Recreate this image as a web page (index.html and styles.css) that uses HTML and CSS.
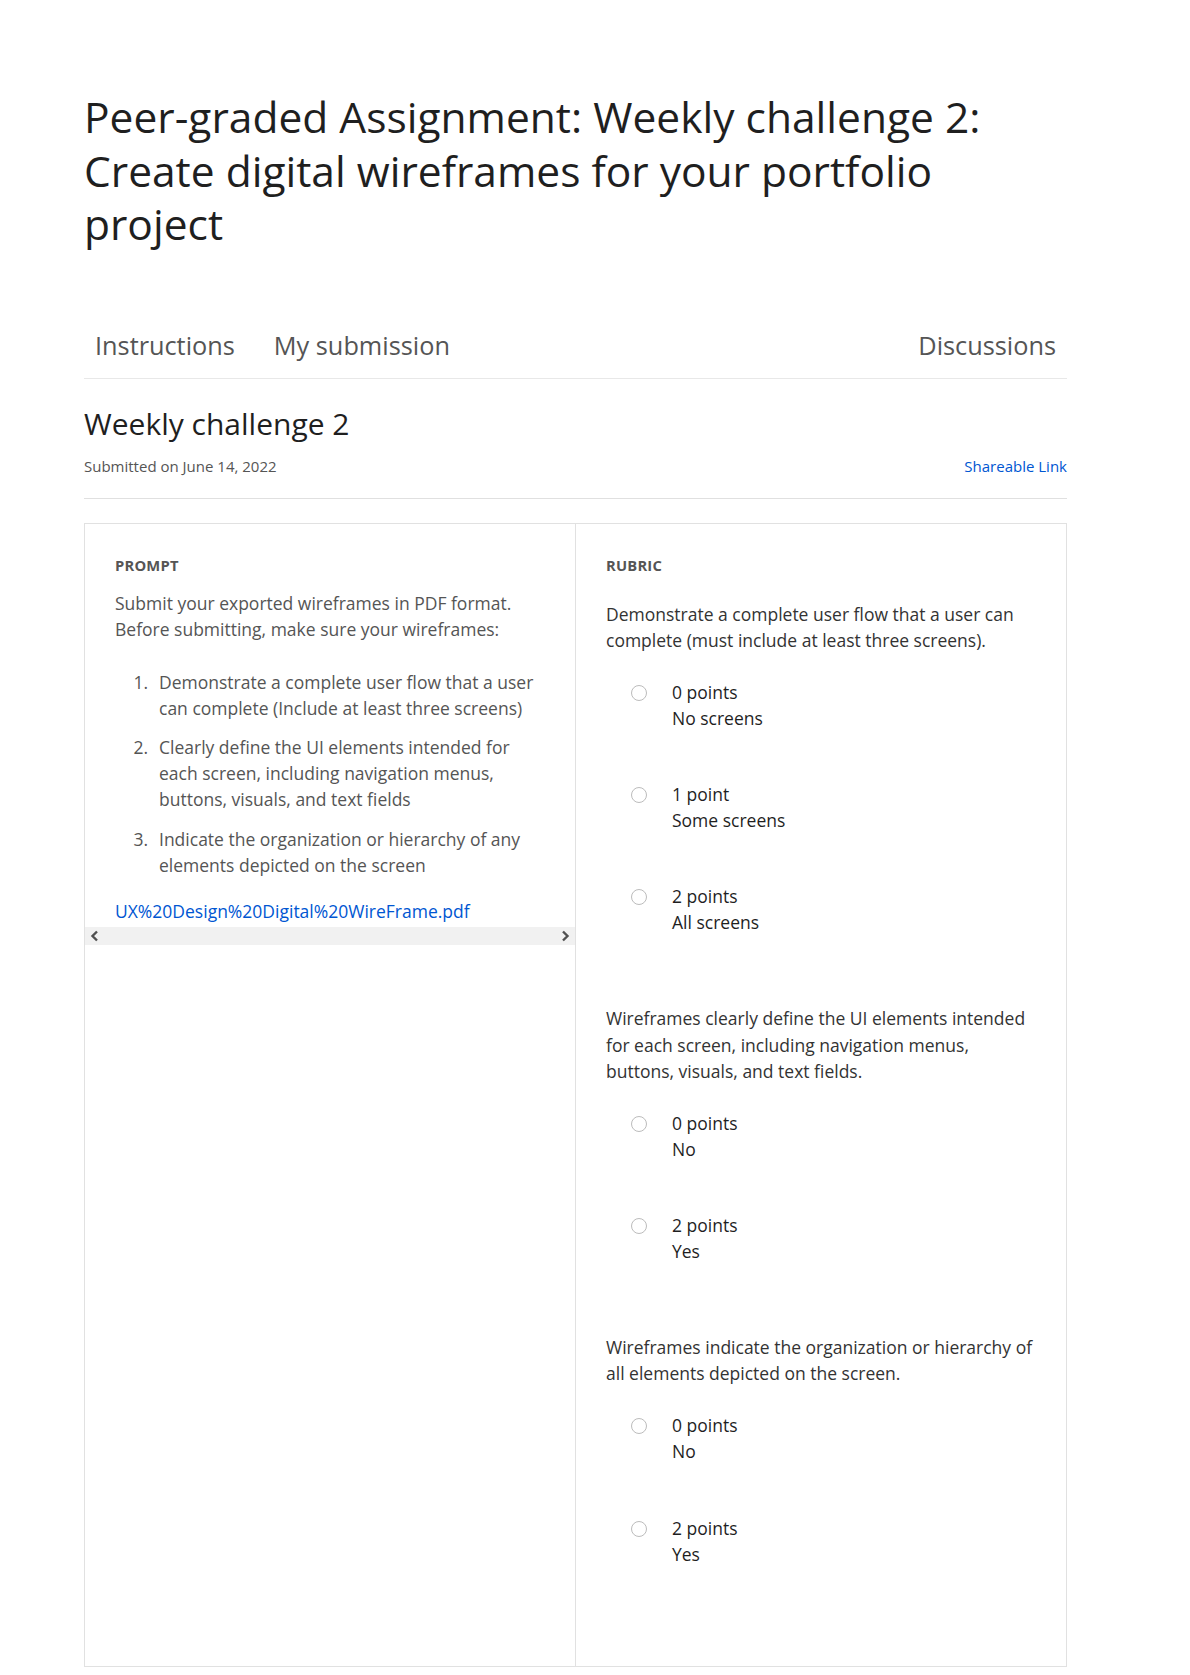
FILE: index.html
```html
<!DOCTYPE html>
<html lang="en">
<head>
<meta charset="utf-8">
<title>Peer-graded Assignment</title>
<link rel="stylesheet" href="styles.css">
</head>
<body>
<main class="page">
  <h1 class="title">Peer-graded Assignment: Weekly challenge 2: Create digital wireframes for your portfolio project</h1>

  <nav class="tabs">
    <div class="tabs-left">
      <a class="tab">Instructions</a>
      <a class="tab">My submission</a>
    </div>
    <a class="tab">Discussions</a>
  </nav>

  <section class="sub-head">
    <h2 class="sub-title">Weekly challenge 2</h2>
    <div class="sub-meta">
      <span class="submitted">Submitted on June 14, 2022</span>
      <a class="share">Shareable Link</a>
    </div>
  </section>

  <section class="grid">
    <div class="col col-prompt">
      <div class="prompt-scroll">
        <h3 class="label">PROMPT</h3>
        <p class="prompt-text">Submit your exported wireframes in PDF format. Before submitting, make sure your wireframes:</p>
        <ol class="prompt-list">
          <li>Demonstrate a complete user flow that a user can complete (Include at least three screens)</li>
          <li>Clearly define the UI elements intended for each screen, including navigation menus, buttons, visuals, and text fields</li>
          <li>Indicate the organization or hierarchy of any elements depicted on the screen</li>
        </ol>
        <a class="file-link">UX%20Design%20Digital%20WireFrame.pdf</a>
      </div>
      <div class="hscroll">
        <svg class="arrow" width="9" height="12" viewBox="0 0 9 12"><path d="M7 1.5 L2.5 6 L7 10.5" fill="none" stroke="#505050" stroke-width="2.4"/></svg>
        <svg class="arrow" width="9" height="12" viewBox="0 0 9 12"><path d="M2 1.5 L6.5 6 L2 10.5" fill="none" stroke="#505050" stroke-width="2.4"/></svg>
      </div>
    </div>

    <div class="col col-rubric">
      <h3 class="label label-rubric">RUBRIC</h3>

      <div class="criterion">
        <p class="crit-text">Demonstrate a complete user flow that a user can complete (must include at least three screens).</p>
        <div class="option"><span class="radio"></span><div class="opt-text"><div>0 points</div><div>No screens</div></div></div>
        <div class="option"><span class="radio"></span><div class="opt-text"><div>1 point</div><div>Some screens</div></div></div>
        <div class="option"><span class="radio"></span><div class="opt-text"><div>2 points</div><div>All screens</div></div></div>
      </div>

      <div class="criterion">
        <p class="crit-text">Wireframes clearly define the UI elements intended for each screen, including navigation menus, buttons, visuals, and text fields.</p>
        <div class="option"><span class="radio"></span><div class="opt-text"><div>0 points</div><div>No</div></div></div>
        <div class="option"><span class="radio"></span><div class="opt-text"><div>2 points</div><div>Yes</div></div></div>
      </div>

      <div class="criterion">
        <p class="crit-text">Wireframes indicate the organization or hierarchy of all elements depicted on the screen.</p>
        <div class="option"><span class="radio"></span><div class="opt-text"><div>0 points</div><div>No</div></div></div>
        <div class="option"><span class="radio"></span><div class="opt-text"><div>2 points</div><div>Yes</div></div></div>
      </div>
    </div>
  </section>
</main>
</body>
</html>
```

FILE: styles.css
```css
* { box-sizing: border-box; }

html, body {
  margin: 0;
  padding: 0;
  background: #ffffff;
}

body {
  font-family: "Open Sans", "Noto Sans", "Liberation Sans", sans-serif;
  color: #1f1f1f;
}

.page {
  width: 983px;
  margin-left: 84px;
  padding-top: 90px;
}

.title {
  margin: 0;
  font-size: 42.5px;
  line-height: 53.5px;
  font-weight: 400;
  color: #1f1f1f;
  width: 960px;
}

.tabs {
  display: flex;
  justify-content: space-between;
  margin-top: 78px;
  border-bottom: 1px solid #e8e8e8;
  padding-bottom: 17px;
}

.tabs-left {
  display: flex;
  gap: 17px;
}

.tab {
  display: block;
  padding: 0 11px;
  font-size: 25.3px;
  line-height: 32px;
  color: #555555;
}

.sub-head {
  padding-top: 25px;
  padding-bottom: 22px;
  border-bottom: 1px solid #e0e0e0;
}

.sub-title {
  margin: 0;
  font-size: 30px;
  line-height: 40px;
  font-weight: 400;
  color: #1f1f1f;
}

.sub-meta {
  display: flex;
  justify-content: space-between;
  margin-top: 12px;
  font-size: 15px;
  line-height: 20px;
}

.submitted { color: #555555; }

.share { color: #0056d2; }

.grid {
  display: grid;
  grid-template-columns: 491px 490px;
  margin-top: 24px;
  border: 1px solid #e1e1e1;
}

.col-prompt {
  border-right: 1px solid #e1e1e1;
}

.prompt-scroll {
  padding: 31px 30px 3px 30px;
}

.label {
  margin: 0;
  font-size: 14.75px;
  line-height: 20px;
  font-weight: 700;
  color: #555555;
  letter-spacing: 0.2px;
}

.prompt-text {
  margin: 15.5px 0 0 0;
  font-size: 17.5px;
  line-height: 26px;
  color: #555555;
}

.prompt-list {
  list-style: none;
  counter-reset: step;
  margin: 26.5px 0 0 0;
  padding-left: 18.5px;
  font-size: 17.5px;
  line-height: 26px;
  color: #555555;
}

.prompt-list li {
  counter-increment: step;
  display: grid;
  grid-template-columns: 25.5px 1fr;
  margin-bottom: 13.5px;
}

.prompt-list li::before {
  content: counter(step) ".";
}

.prompt-list li:last-child { margin-bottom: 0; }

.file-link {
  display: block;
  margin-top: 20px;
  font-size: 17.5px;
  line-height: 26px;
  color: #0056d2;
  white-space: nowrap;
}

.hscroll {
  height: 18px;
  background: #f1f1f1;
  display: flex;
  justify-content: space-between;
  align-items: center;
  padding: 0 5px;
}

.arrow { display: block; }

.col-rubric {
  display: flex;
  flex-direction: column;
  padding: 31px 30px 99px 30px;
}

.label-rubric { margin-bottom: 26px; }

.criterion {
  display: flex;
  flex-direction: column;
  gap: 50.3px;
  margin-bottom: 70px;
}

.criterion:last-child { margin-bottom: 0; }

.crit-text {
  margin: 0 0 -24.5px 0;
  font-size: 17.5px;
  line-height: 26.2px;
  color: #333333;
}

.option {
  display: flex;
  align-items: flex-start;
  padding-left: 24.5px;
  font-size: 17.5px;
  line-height: 26px;
  color: #1f1f1f;
}

.radio {
  flex: none;
  width: 16px;
  height: 16px;
  margin-top: 6px;
  border: 1.5px solid #bcbcbc;
  border-radius: 50%;
  background: #fff;
}

.opt-text { margin-left: 25.5px; }
```
